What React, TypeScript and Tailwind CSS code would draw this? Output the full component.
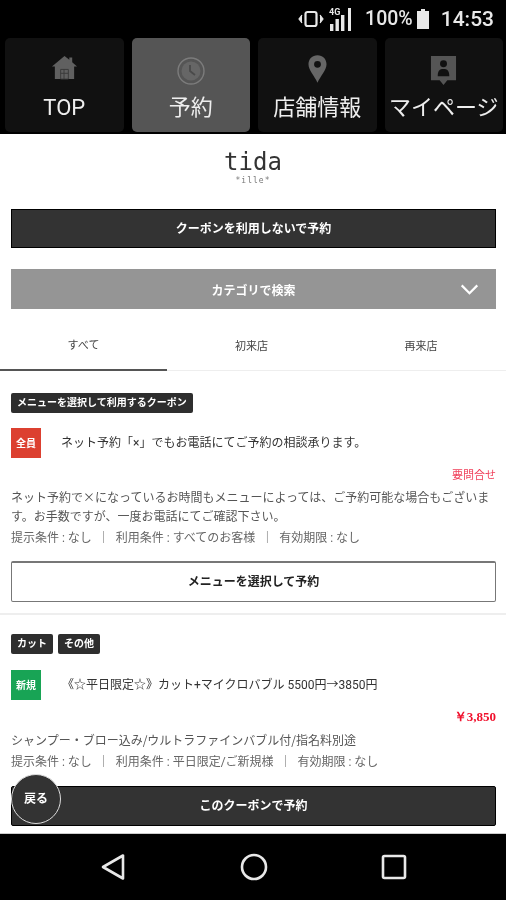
const jp = "font-['Roboto','Noto_Sans_CJK_JP',sans-serif]"

function HomeIcon() {
  return (
    <svg viewBox="0 0 28 28" className="mb-[3px] h-[27px] w-[27px] text-[#606060]" fill="currentColor">
      <path d="M14 2 L19 6 V3.5 H22 V8.5 L27 13 H24 V26 H4 V13 H1 Z" />
      <path d="M10 16 h8 v10 h-8 z M13.5 16 v10 M10 20 h8" fill="none" stroke="#3a3a3a" strokeWidth="1" />
    </svg>
  )
}

function ClockIcon() {
  return (
    <svg viewBox="0 0 28 28" className="mb-[-1px] h-[28px] w-[28px]" fill="none">
      <circle cx="14" cy="14" r="13" stroke="#7c7c7c" strokeWidth="1.4" />
      <circle cx="14" cy="14" r="9.5" fill="#666" />
      <path d="M13 8 V14 L18 18" stroke="#4a4a4a" strokeWidth="1.8" />
    </svg>
  )
}

function PinIcon() {
  return (
    <svg viewBox="0 0 20 30" className="h-[29px] w-[19px]">
      <path fillRule="evenodd" fill="#666" d="M10 0 C4.5 0 .5 4 .5 9.5 C.5 16 7 22 10 29 C13 22 19.5 16 19.5 9.5 C19.5 4 15.5 0 10 0 Z M10 6 a3.6 3.6 0 1 1 0 7.2 a3.6 3.6 0 1 1 0 -7.2 Z" />
    </svg>
  )
}

function MyPageIcon() {
  return (
    <svg viewBox="0 0 28 32" className="mb-[-3px] h-[31px] w-[27px]">
      <path fill="#555" d="M1 0 H27 V25 H18 L14 30 L10 25 H1 Z" />
      <circle cx="14" cy="8" r="3.6" fill="#111" />
      <path fill="#111" d="M8 21 C8 15 10 13.5 14 13.5 C18 13.5 20 15 20 21 Z" />
    </svg>
  )
}

const tabs = [
  { label: 'TOP', icon: <HomeIcon />, active: false },
  { label: '予約', icon: <ClockIcon />, active: true },
  { label: '店舗情報', icon: <PinIcon />, active: false },
  { label: 'マイページ', icon: <MyPageIcon />, active: false },
]

function StatusBar() {
  return (
    <div className="flex h-[38px] items-center justify-end bg-black pr-[12px] text-[#e8e8e8]">
      {/* vibrate */}
      <svg viewBox="0 0 26 18" className="mr-[5px] h-[18px] w-[26px]" fill="none">
        <rect x="7.5" y="2" width="11" height="14" rx="2" stroke="currentColor" strokeWidth="2.2" />
        <path d="M4 5 L1 9 L4 13 M22 5 L25 9 L22 13" fill="currentColor" stroke="currentColor" strokeWidth="1.2" />
      </svg>
      {/* signal */}
      <svg viewBox="0 0 24 26" className="mr-[12px] h-[26px] w-[24px]">
        <text x="0" y="9" fontSize="9" fontWeight="700" fontFamily="Roboto" fill="currentColor">4G</text>
        <rect x="1" y="18" width="3.4" height="7" fill="currentColor" />
        <rect x="6.5" y="13" width="3.4" height="12" fill="currentColor" />
        <rect x="12" y="9" width="3.4" height="16" fill="currentColor" />
        <rect x="19" y="2" width="3" height="23" fill="currentColor" />
      </svg>
      <span className="font-['Roboto',sans-serif] text-[19.5px] leading-none font-medium">100%</span>
      <svg viewBox="0 0 12 20" className="mr-[11px] ml-[3px] h-[20px] w-[14px]" fill="currentColor">
        <path d="M4 0 H8 V2 H12 V20 H0 V2 H4 Z" />
      </svg>
      <span className="font-['Roboto',sans-serif] text-[21px] leading-none font-medium">14:53</span>
    </div>
  )
}

function NavTabs() {
  return (
    <div className="grid h-[96px] grid-cols-4 gap-[8px] bg-black pr-[3px] pb-[2px] pl-[5px]">
      {tabs.map((t) => (
        <div
          key={t.label}
          className={`flex flex-col items-center rounded-[5px] ${t.active ? 'bg-[#555]' : 'bg-[#111]'}`}
        >
          <div className="flex h-[46px] items-end justify-center">{t.icon}</div>
          <div className={`mt-[10px] whitespace-nowrap text-[22px] leading-[28px] text-[#eee] ${jp}`}>{t.label}</div>
        </div>
      ))}
    </div>
  )
}

function Coupon(props: {
  tags: string[]
  badge: string
  badgeColor: string
  head: string
  title: string
  titleIndent: string
  price: React.ReactNode
  desc: string
  terms: string
  cta: React.ReactNode
}) {
  return (
    <div className="pr-[10px] pl-[11px]">
      <div className="flex gap-[5px]">
        {props.tags.map((tag) => (
          <span key={tag} className="rounded-[2px] bg-[#2e2e2e] px-[6px] text-[10px] leading-[20px] font-bold text-white">
            {tag}
          </span>
        ))}
      </div>
      <div className={`flex h-[30px] items-center ${props.head}`}>
        <span className={`flex h-[30px] w-[30px] shrink-0 items-center justify-center text-[10px] font-bold text-white ${props.badgeColor}`}>
          {props.badge}
        </span>
        <div className={`text-[12px] whitespace-nowrap text-[#333] ${props.titleIndent}`}>{props.title}</div>
      </div>
      {props.price}
      <p className="font-['Noto_Sans_CJK_JP',sans-serif] text-[12px] leading-[19px] text-[#555]">{props.desc}</p>
      <p className="mt-[4px] text-[12px] leading-[18px] whitespace-pre text-[#666]">{props.terms}</p>
      {props.cta}
    </div>
  )
}

export default function App() {
  return (
    <div className={`relative flex h-[900px] w-[506px] flex-col overflow-hidden bg-white blur-[0.7px] ${jp}`}>
      <StatusBar />
      <NavTabs />

      <div className="min-h-0 flex-1 overflow-hidden">
        {/* logo */}
        <div className="flex h-[75px] flex-col items-center pt-[15px]">
          <div className="font-['DejaVu_Sans_Mono',monospace] text-[24px] leading-[26px] text-[#333]">tida</div>
          <div className="mt-[2px] font-['DejaVu_Sans_Mono',monospace] text-[8px] leading-[8px] tracking-[1px] text-[#777]">*ille*</div>
        </div>

        <div className="pr-[10px] pl-[11px]">
          <div className="flex h-[39px] items-center justify-center border border-black bg-[#333] pt-px text-[12px] font-bold text-white">
            クーポンを利用しないで予約
          </div>
          <div className="relative mt-[21px] flex h-[40px] items-center justify-center bg-[#959595] pt-[3px] text-[12px] font-bold text-white">
            カテゴリで検索
            <svg viewBox="0 0 20 12" className="absolute top-[15px] right-[17px] h-[11px] w-[19px]" fill="none">
              <path d="M1.5 1.5 L10 10 L18.5 1.5" stroke="white" strokeWidth="2.4" />
            </svg>
          </div>
        </div>

        {/* tabs */}
        <div className="mt-[15px] grid h-[47px] grid-cols-[167px_169px_1fr] border-b border-[#eee] text-[11px] text-[#444]">
          <div className="-mb-px flex items-center justify-center border-b-2 border-[#555]">すべて</div>
          <div className="flex items-center justify-center">初来店</div>
          <div className="flex items-center justify-center">再来店</div>
        </div>

        <div className="border-b-2 border-[#eee] pt-[22px] pb-[11px]">
          <Coupon
            tags={['メニューを選択して利用するクーポン']}
            badge="全員"
            badgeColor="bg-[#dc4030]"
            head="mt-[15px]"
            title="ネット予約「×」でもお電話にてご予約の相談承ります。"
            titleIndent="ml-[20px]"
            price={<div className="mt-[10px] mb-[3px] text-right text-[11px] leading-[16px] text-[#f0405a]">要問合せ</div>}
            desc="ネット予約で×になっているお時間もメニューによっては、ご予約可能な場合もございます。お手数ですが、一度お電話にてご確認下さい。"
            terms="提示条件 : なし  ｜  利用条件 : すべてのお客様  ｜  有効期限 : なし"
            cta={
              <div className="mt-[14px] flex h-[41px] items-center justify-center rounded-[2px] border border-t-2 border-[#777] bg-white text-[12px] font-bold text-[#222]">
                メニューを選択して予約
              </div>
            }
          />
        </div>

        <div className="pt-[19px]">
          <Coupon
            tags={['カット', 'その他']}
            badge="新規"
            badgeColor="bg-[#18a455]"
            head="mt-[16px]"
            title="《☆平日限定☆》カット+マイクロバブル 5500円→3850円"
            titleIndent="ml-[21px]"
            price={<div className="mt-[9px] mb-[5px] text-right font-['Liberation_Serif',serif] text-[13px] leading-[16px] font-bold text-[#f0102c]">￥3,850</div>}
            desc="シャンプー・ブロー込み/ウルトラファインバブル付/指名料別途"
            terms="提示条件 : なし  ｜  利用条件 : 平日限定/ご新規様  ｜  有効期限 : なし"
            cta={
              <div className="mt-[15px] flex h-[40px] items-center justify-center rounded-[2px] border border-black bg-[#333] text-[12px] font-bold text-white">
                このクーポンで予約
              </div>
            }
          />
        </div>
      </div>

      {/* back button */}
      <div className="absolute top-[774px] left-[11px] flex h-[50px] w-[50px] items-center justify-center rounded-full border-[1.5px] border-[#ddd] bg-[#333] text-[12px] font-bold text-white">
        戻る
      </div>

      {/* android nav */}
      <div className="flex h-[67px] items-center justify-between border-t border-[#ccc] bg-black pr-[99px] pl-[100px]">
        <svg viewBox="0 0 26 28" className="h-[28px] w-[26px]" fill="none">
          <path d="M23 2.5 V25.5 L3 14 Z" stroke="#e8e8e8" strokeWidth="2.6" strokeLinejoin="round" />
        </svg>
        <svg viewBox="0 0 28 28" className="h-[28px] w-[28px]" fill="none">
          <circle cx="14" cy="14" r="12" stroke="#e8e8e8" strokeWidth="2.6" />
        </svg>
        <svg viewBox="0 0 26 26" className="h-[26px] w-[26px]" fill="none">
          <rect x="2" y="2" width="22" height="22" rx="1.5" stroke="#e8e8e8" strokeWidth="2.6" />
        </svg>
      </div>
    </div>
  )
}
